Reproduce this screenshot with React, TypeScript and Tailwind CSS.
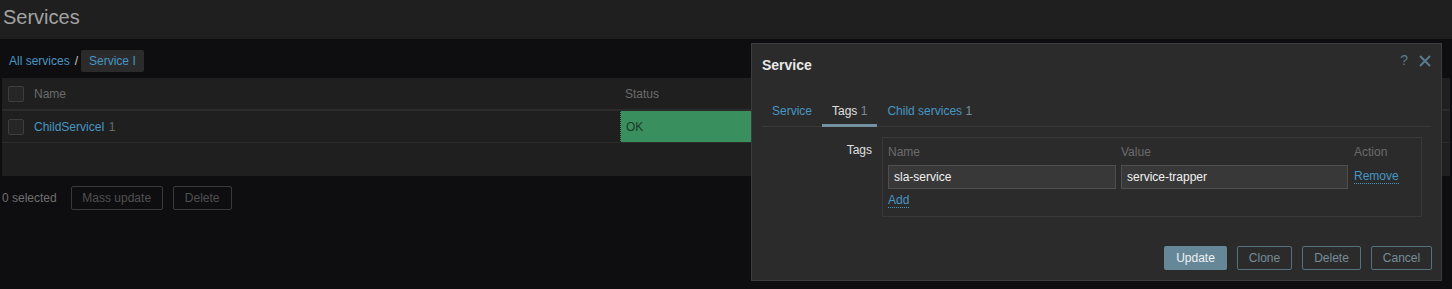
import React from "react";

const font = { fontFamily: '"Liberation Sans", Arial, sans-serif' };

function Checkbox() {
  return <div className="w-4 h-4 border border-[#3d3d3d] bg-[#262626] rounded-[2px] shrink-0" />;
}

export default function App() {
  return (
    <div className="relative w-[1452px] h-[289px] bg-[#0e0e10] overflow-hidden text-[12px]" style={font}>
      {/* header */}
      <div className="h-[39px] bg-[#1f1f1f] flex items-center pl-[3px] pb-[5px]">
        <h1 className="text-[20px] text-[#a3a3a3] leading-none">Services</h1>
      </div>

      {/* breadcrumb */}
      <div className="flex items-center h-[22px] mt-[11px] pl-[9px]">
        <span className="text-[#4796c4]">All services</span>
        <span className="text-[#c8c8c8] ml-[5px] mr-[3px]">/</span>
        <span className="h-[22px] px-[8px] flex items-center bg-[#2b2b2b] rounded-[2px] text-[#4796c4]">Service I</span>
      </div>

      {/* table */}
      <div className="mt-[6px] ml-[2px] mr-[2px] bg-[#1f1f1f]">
        <div className="h-[33px] flex items-center border-b-2 border-[#2b2b2b]">
          <div className="pl-[6px] w-[32px]"><Checkbox /></div>
          <span className="text-[#6b6b6b] w-[586px]">Name</span>
          <span className="text-[#6b6b6b] pl-[5px]">Status</span>
        </div>
        <div className="h-[32px] flex items-stretch border-b border-[#2b2b2b]">
          <div className="pl-[6px] w-[32px] flex items-center"><Checkbox /></div>
          <div className="w-[586px] flex items-center">
            <span className="text-[#4796c4]">ChildServiceI</span>
            <span className="text-[#6b6b6b] ml-[4px]">1</span>
          </div>
          <div className="w-[140px] bg-[#3a8f5e] flex items-center pl-[5px] text-[#1c3a27] border-l border-dotted border-[#1f1f1f]">OK</div>
        </div>
        <div className="h-[33px]" />
      </div>

      {/* footer */}
      <div className="flex items-center mt-[10px] pl-[2px]">
        <span className="text-[#6e6e6e] mr-[14px]">0 selected</span>
        <div className="h-[24px] w-[92px] border border-[#3a3a3a] rounded-[2px] flex items-center justify-center text-[#505050]">Mass update</div>
        <div className="h-[24px] w-[59px] ml-[10px] border border-[#3a3a3a] rounded-[2px] flex items-center justify-center text-[#505050]">Delete</div>
      </div>

      {/* modal */}
      <div className="absolute left-[751px] top-[43px] w-[691px] h-[238px] bg-[#2b2b2b] border border-[#3b3b3b] px-[10px]">
        <div className="absolute right-[10px] top-[6px] flex items-center gap-[11px] text-[#5a7a8e]">
          <span className="text-[14px]">?</span>
          <svg width="12" height="12" viewBox="0 0 12 12"><path d="M1 1L11 11M11 1L1 11" stroke="#5a7a8e" strokeWidth="2" /></svg>
        </div>
        <div className="pt-[11px] h-[44px] text-[14px] font-bold text-[#e8e8e8]">Service</div>
        <div className="mt-[13px] flex border-b border-[#383838] h-[26px]">
          <div className="px-[10px] text-[#4796c4] pt-[1px]">Service</div>
          <div className="px-[10px] text-[#e0e0e0] pt-[1px] border-b-[3px] border-[#74919f] h-[26px] -mb-px">Tags <span className="text-[#768d99]">1</span></div>
          <div className="px-[10px] text-[#4796c4] pt-[1px]">Child services <span className="text-[#768d99]">1</span></div>
        </div>
        <div className="flex mt-[10px]">
          <div className="w-[110px] text-right text-[#e0e0e0] pt-[4px]">Tags</div>
          <div className="ml-[10px] w-[540px] h-[80px] border border-[#383838] px-[5px] pt-[6px]">
            <div className="flex text-[#6b6b6b] h-[16px] items-center">
              <span className="w-[233px]">Name</span>
              <span className="w-[233px]">Value</span>
              <span>Action</span>
            </div>
            <div className="flex items-center mt-[5px]">
              <div className="w-[228px] h-[24px] bg-[#383838] border border-[#4f4f4f] flex items-center pl-[5px] text-[#f2f2f2]">sla-service</div>
              <div className="w-[227px] h-[24px] ml-[5px] bg-[#383838] border border-[#4f4f4f] flex items-center pl-[5px] text-[#f2f2f2]">service-trapper</div>
              <span className="ml-[6px] text-[#4796c4] border-b border-dotted border-[#4796c4] leading-[13px]">Remove</span>
            </div>
            <div className="mt-[2px]">
              <span className="text-[#4796c4] border-b border-dotted border-[#4796c4] leading-[13px]">Add</span>
            </div>
          </div>
        </div>
        <div className="absolute right-[9px] bottom-[10px] flex gap-[10px]">
          <div className="h-[24px] w-[63px] bg-[#668797] rounded-[2px] flex items-center justify-center text-[#eef3f5]">Update</div>
          <div className="h-[24px] w-[55px] border border-[#56717e] rounded-[2px] flex items-center justify-center text-[#768d99]">Clone</div>
          <div className="h-[24px] w-[59px] border border-[#56717e] rounded-[2px] flex items-center justify-center text-[#768d99]">Delete</div>
          <div className="h-[24px] w-[61px] border border-[#56717e] rounded-[2px] flex items-center justify-center text-[#768d99]">Cancel</div>
        </div>
      </div>
    </div>
  );
}
